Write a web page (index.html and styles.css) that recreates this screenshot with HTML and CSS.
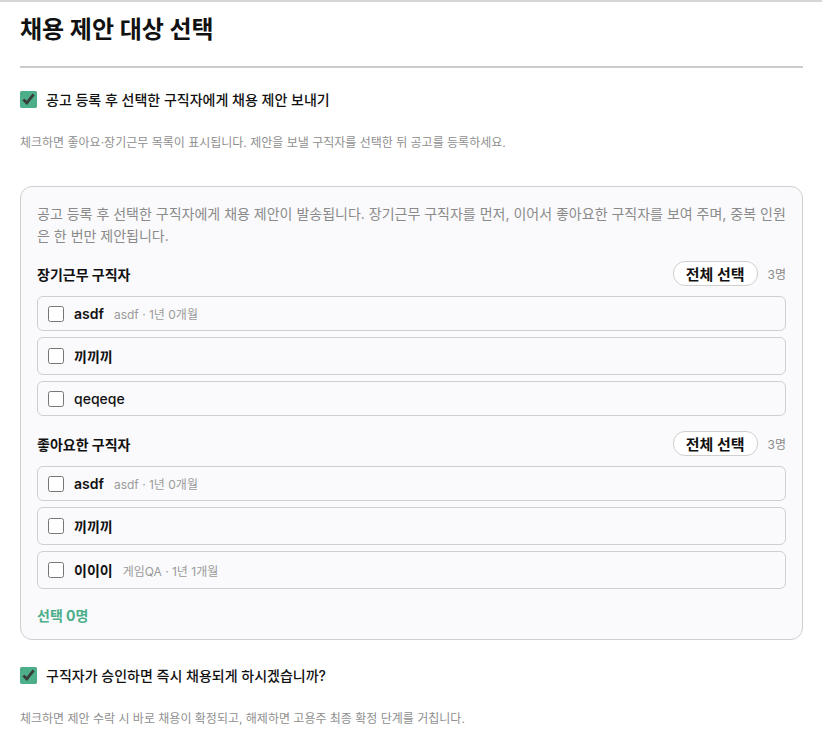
FILE: index.html
```html
<!DOCTYPE html>
<html lang="ko">
<head>
  <meta charset="UTF-8">
  <meta name="viewport" content="width=device-width, initial-scale=1.0">
  <title>채용 제안 대상 선택</title>
  <link rel="stylesheet" href="styles.css">
</head>
<body>
  <div class="page">
    <h1>채용 제안 대상 선택</h1>
    <hr class="divider">

    <label class="option">
      <input type="checkbox" class="main-check" checked>
      공고 등록 후 선택한 구직자에게 채용 제안 보내기
    </label>
    <p class="hint">체크하면 좋아요·장기근무 목록이 표시됩니다. 제안을 보낼 구직자를 선택한 뒤 공고를 등록하세요.</p>

    <div class="panel">
      <p class="panel-desc">공고 등록 후 선택한 구직자에게 채용 제안이 발송됩니다. 장기근무 구직자를 먼저, 이어서 좋아요한 구직자를 보여 주며, 중복 인원은 한 번만 제안됩니다.</p>

      <div class="group">
        <div class="group-head">
          <h3>장기근무 구직자</h3>
          <button class="select-all">전체 선택</button>
          <span class="count">3명</span>
        </div>
        <label class="seeker"><input type="checkbox"><b>asdf</b><span class="meta">asdf · 1년 0개월</span></label>
        <label class="seeker"><input type="checkbox"><b>끼끼끼</b></label>
        <label class="seeker"><input type="checkbox"><b class="plain">qeqeqe</b></label>
      </div>

      <div class="group">
        <div class="group-head">
          <h3>좋아요한 구직자</h3>
          <button class="select-all">전체 선택</button>
          <span class="count">3명</span>
        </div>
        <label class="seeker"><input type="checkbox"><b>asdf</b><span class="meta">asdf · 1년 0개월</span></label>
        <label class="seeker"><input type="checkbox"><b>끼끼끼</b></label>
        <label class="seeker"><input type="checkbox"><b>이이이</b><span class="meta">게임QA · 1년 1개월</span></label>
      </div>

      <div class="selected">선택 0명</div>
    </div>

    <label class="option option-last">
      <input type="checkbox" class="main-check" checked>
      구직자가 승인하면 즉시 채용되게 하시겠습니까?
    </label>
    <p class="hint">체크하면 제안 수락 시 바로 채용이 확정되고, 해제하면 고용주 최종 확정 단계를 거칩니다.</p>
  </div>
</body>
</html>
```

FILE: styles.css
```css
body {
  margin: 0;
  font-family: Inter, "Noto Sans CJK KR", sans-serif;
  color: #111;
  background: #fff;
}
.page {
  border-top: 2px solid #d6d6d6;
  padding: 0 19px 0 20px;
}
h1 {
  font-size: 24px;
  font-weight: 700;
  margin: 12px 0 0;
  line-height: 32px;
}
.divider {
  border: 0;
  height: 2px;
  background: #cccccc;
  margin: 20px 0 0;
}
.option {
  display: flex;
  align-items: center;
  gap: 9px;
  margin-top: 21px;
  font-size: 14px;
  font-weight: 500;
}
.option-last {
  margin-top: 25px;
}
.main-check {
  width: 17px;
  height: 17px;
  margin: 0;
  accent-color: #4caf8a;
}
.hint {
  font-size: 12px;
  color: #8f8f8f;
  margin: 24px 0 0;
}
.panel {
  margin-top: 36px;
  border: 1px solid #cfcfcf;
  border-radius: 12px;
  background: #fafafc;
  padding: 16px 16px 14px;
}
.panel-desc {
  font-size: 14px;
  line-height: 22px;
  color: #8a8a8a;
  margin: 0;
}
.group {
  display: flex;
  flex-direction: column;
  gap: 6px;
  margin-top: 14px;
}
.group + .group {
  margin-top: 15px;
}
.group-head {
  display: flex;
  align-items: center;
  gap: 10px;
  margin-bottom: 4px;
}
.group-head h3 {
  flex: 1;
  margin: 0;
  font-size: 14px;
  font-weight: 700;
}
.select-all {
  font-family: inherit;
  font-size: 15px;
  font-weight: 700;
  color: #111;
  background: #fff;
  border: 1px solid #cfcfcf;
  border-radius: 12px;
  height: 25px;
  padding: 0 12px;
}
.count {
  font-size: 12px;
  color: #8a8a8a;
}
.seeker {
  display: flex;
  align-items: center;
  gap: 10px;
  border: 1px solid #cfcfcf;
  border-radius: 6px;
  padding: 8px 10px;
  font-size: 14px;
}
.seeker input {
  width: 16px;
  height: 16px;
  margin: 0;
}
.seeker b {
  font-weight: 600;
}
.seeker b.plain {
  font-weight: 500;
}
.meta {
  font-size: 12px;
  color: #9a9a9a;
}
.selected {
  margin-top: 16px;
  font-size: 14px;
  font-weight: 700;
  color: #4caf8a;
}
```
